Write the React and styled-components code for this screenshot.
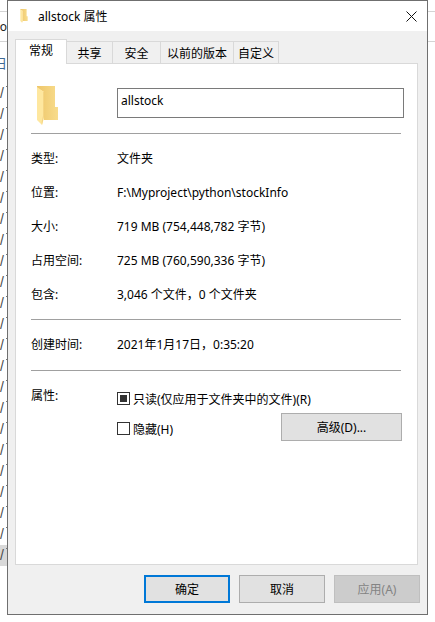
import React from 'react'
import styled, { createGlobalStyle } from 'styled-components'

const GlobalStyle = createGlobalStyle`
  html, body {
    margin: 0;
    padding: 0;
    background: #fff;
  }
  body {
    font-family: 'Noto Sans', 'Noto Sans CJK SC', sans-serif;
    font-size: 12px;
    color: #000;
  }
`

const Desktop = styled.div`
  width: 435px;
  height: 622px;
  display: flex;
  align-items: flex-start;
  overflow: hidden;
  background: #fff;
`
const BehindLeft = styled.div`
  width: 7px;
  flex: none;
  display: flex;
  flex-direction: column;
  overflow: hidden;
`
const BehindLine = styled.div`
  height: ${p => p.$h}px;
  border-bottom: 1px solid #d4d4d4;
  box-sizing: border-box;
  display: flex;
  align-items: center;
  justify-content: flex-end;
  overflow: hidden;
  font-size: 12px;
  color: #222;
`
const BehindDay = styled.div`
  height: 41px;
  flex: none;
  padding-top: 14px;
  box-sizing: border-box;
  display: flex;
  justify-content: flex-end;
  overflow: hidden;
  font-size: 13px;
  line-height: 14px;
  color: #3f6a96;
`
const SlashRow = styled.div`
  position: relative;
  height: 21px;
  flex: none;
  background: ${p => (p.$active ? '#d9d9d9' : 'transparent')};
  font-family: 'Liberation Sans', sans-serif;
  font-size: 14px;
  line-height: 21px;
  color: #4a4a4a;
  &::after {
    content: '';
    position: absolute;
    right: 0;
    top: 3px;
    width: 1px;
    height: 1px;
    background: #777;
  }
`
const BehindRight = styled.div`
  flex: 1;
  display: flex;
  flex-direction: column;
  overflow: hidden;
`
const Dialog = styled.div`
  width: 421px;
  height: 615px;
  flex: none;
  box-sizing: border-box;
  border: 1px solid #6f6f6f;
  background: #f0f0f0;
  display: flex;
  flex-direction: column;
`
const TitleBar = styled.div`
  height: 30px;
  flex: none;
  background: #fff;
  display: flex;
  align-items: center;
  padding: 0 10px 0 11px;
`
const TitleText = styled.span`
  margin-left: 9px;
  flex: 1;
`
const Tabs = styled.div`
  display: flex;
  align-items: flex-end;
  height: 24px;
  margin: 9px 0 -1px 7px;
  position: relative;
  z-index: 1;
`
const Tab = styled.div`
  box-sizing: border-box;
  height: ${p => (p.$active ? 25 : 23)}px;
  padding: ${p => (p.$active ? '0 0 4px' : '0')};
  width: ${p => p.$w}px;
  margin-left: ${p => (p.$first ? 0 : -1)}px;
  display: flex;
  align-items: center;
  justify-content: center;
  border: 1px solid #d9d9d9;
  border-bottom: ${p => (p.$active ? 'none' : '1px solid #d9d9d9')};
  background: ${p => (p.$active ? '#fff' : '#f0f0f0')};
  position: relative;
  z-index: ${p => (p.$active ? 2 : 0)};
`
const Panel = styled.div`
  height: 502px;
  flex: none;
  box-sizing: border-box;
  margin: 0 9px 0 7px;
  border: 1px solid #d9d9d9;
  background: #fff;
  padding: 24px 16px 0 15px;
`
const HeadRow = styled.div`
  display: flex;
  height: 30px;
`
const IconSlot = styled.div`
  width: 86px;
  flex: none;
  padding: 0 0 0 6px;
  margin-top: -2px;
  box-sizing: border-box;
`
const NameBox = styled.div`
  flex: 1;
  margin-right: -3px;
  box-sizing: border-box;
  border: 1px solid #7a7a7a;
  padding: 0 3px;
  display: flex;
  align-items: center;
  height: 30px;
  padding-bottom: 6px;
`
const Rule = styled.div`
  height: 1px;
  background: #a0a0a0;
  margin-top: ${p => p.$top}px;
`
const Rows = styled.div`
  margin-top: ${p => p.$top}px;
`
const Row = styled.div`
  height: 34px;
  display: grid;
  grid-template-columns: 86px 1fr;
  align-items: center;
`
const AttrSection = styled.div`
  display: grid;
  grid-template-columns: 86px 1fr;
  margin-top: 17px;
`
const AttrLabel = styled.div`
  line-height: 16px;
`
const AttrList = styled.div`
  display: flex;
  flex-direction: column;
`
const CheckRow = styled.div`
  display: flex;
  align-items: center;
  height: 13px;
  margin-top: ${p => p.$top}px;
  justify-content: ${p => (p.$spread ? 'space-between' : 'flex-start')};
`
const CheckGroup = styled.div`
  display: flex;
  align-items: center;
`
const Check = styled.span`
  width: 13px;
  height: 13px;
  flex: none;
  box-sizing: border-box;
  border: 1px solid #333;
  background: #fff;
  display: flex;
  align-items: center;
  justify-content: center;
  margin-right: 3px;
  &::after {
    content: '';
    width: 7px;
    height: 7px;
    background: ${p => (p.$mixed ? '#333' : 'transparent')};
  }
`
const Button = styled.div`
  box-sizing: border-box;
  width: ${p => p.$w}px;
  height: 28px;
  flex: none;
  display: flex;
  align-items: center;
  justify-content: center;
  background: ${p => (p.$disabled ? '#cccccc' : '#e1e1e1')};
  color: ${p => (p.$disabled ? '#838383' : '#000')};
  border: ${p => (p.$primary ? '2px solid #0078d7' : p.$disabled ? '1px solid #bfbfbf' : '1px solid #adadad')};
`
const AdvancedButton = styled(Button)`
  margin-top: -4px;
  margin-right: -1px;
`
const Footer = styled.div`
  display: flex;
  justify-content: flex-end;
  gap: 9px;
  padding: 10px 7px 0 0;
`

const Folder = ({ width, height }) => (
  <svg width={width} height={height} viewBox="0 0 21 40">
    <defs>
      <linearGradient id={`back${width}`} x1="0" x2="1" y1="0" y2="0">
        <stop offset="0" stopColor="#eec66a" />
        <stop offset="1" stopColor="#f8dc8c" />
      </linearGradient>
    </defs>
    <path d="M0 0H18V21H21V34H7V6L0 2Z" fill={`url(#back${width})`} />
    <path d="M0 1L7 6V31L5 39L0 34Z" fill="#fee79f" />
    <path d="M6 5L7 6V31L5 39L4.6 36L6 30Z" fill="#f5d584" />
  </svg>
)

const CloseIcon = () => (
  <svg width="11" height="11" viewBox="0 0 11 11">
    <path d="M0.5 0.5L10.5 10.5M10.5 0.5L0.5 10.5" stroke="#111" strokeWidth="1" fill="none" />
  </svg>
)

const tabs = [
  { label: '常规', w: 52, active: true },
  { label: '共享', w: 47 },
  { label: '安全', w: 49 },
  { label: '以前的版本', w: 74 },
  { label: '自定义', w: 46 },
]

const info = [
  ['类型:', '文件夹'],
  ['位置:', 'F:\\Myproject\\python\\stockInfo'],
  ['大小:', '719 MB (754,448,782 字节)'],
  ['占用空间:', '725 MB (760,590,336 字节)'],
  ['包含:', '3,046 个文件，0 个文件夹'],
]

const slashes = Array.from({ length: 23 }, (_, i) => i)

const App = () => {
  return (
    <Desktop>
      <GlobalStyle />
      <BehindLeft>
        <BehindLine $h={12} />
        <BehindLine $h={30}>o</BehindLine>
        <BehindDay>日</BehindDay>
        {slashes.map(i => (
          <SlashRow key={i} $active={i === 22}>/</SlashRow>
        ))}
      </BehindLeft>
      <Dialog>
        <TitleBar>
          <Folder width={10} height={14} />
          <TitleText>allstock 属性</TitleText>
          <CloseIcon />
        </TitleBar>
        <Tabs>
          {tabs.map((t, i) => (
            <Tab key={t.label} $w={t.w} $active={t.active} $first={i === 0}>{t.label}</Tab>
          ))}
        </Tabs>
        <Panel>
          <HeadRow>
            <IconSlot><Folder width={21} height={40} /></IconSlot>
            <NameBox>allstock</NameBox>
          </HeadRow>
          <Rule $top={15} />
          <Rows $top={7}>
            {info.map(([k, v]) => (
              <Row key={k}><span>{k}</span><span>{v}</span></Row>
            ))}
          </Rows>
          <Rule $top={8} />
          <Rows $top={7}>
            <Row><span>创建时间:</span><span>2021年1月17日，0:35:20</span></Row>
          </Rows>
          <Rule $top={9} />
          <AttrSection>
            <AttrLabel>属性:</AttrLabel>
            <AttrList>
              <CheckRow $top={4}>
                <Check $mixed />
                <span>只读(仅应用于文件夹中的文件)(R)</span>
              </CheckRow>
              <CheckRow $top={17} $spread>
                <CheckGroup>
                  <Check />
                  <span>隐藏(H)</span>
                </CheckGroup>
                <AdvancedButton $w={121}>高级(D)...</AdvancedButton>
              </CheckRow>
            </AttrList>
          </AttrSection>
        </Panel>
        <Footer>
          <Button $w={86} $primary>确定</Button>
          <Button $w={86}>取消</Button>
          <Button $w={86} $disabled>应用(A)</Button>
        </Footer>
      </Dialog>
      <BehindRight>
        <BehindLine $h={12} />
        <BehindLine $h={30}>&nbsp;</BehindLine>
      </BehindRight>
    </Desktop>
  )
}

export default App
